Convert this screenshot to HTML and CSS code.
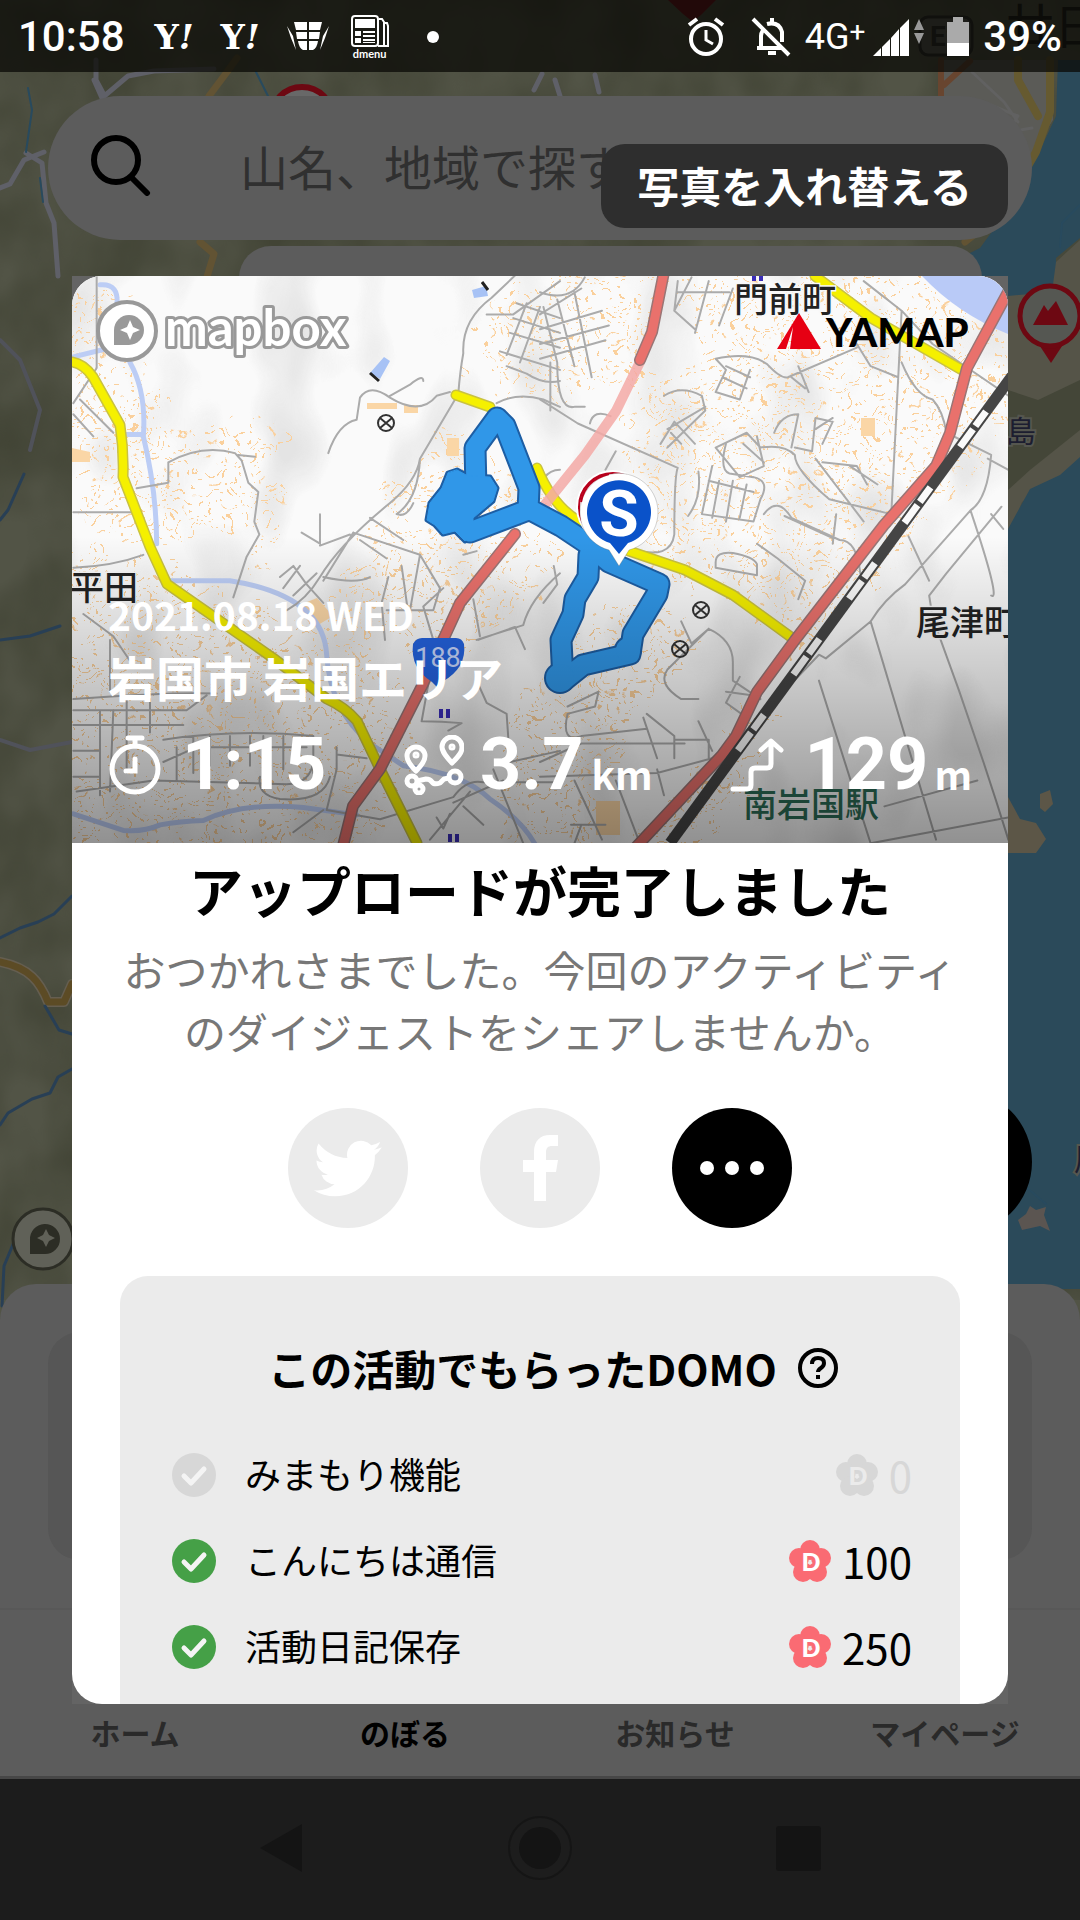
FILE: index.html
```html
<!DOCTYPE html>
<html lang="ja">
<head>
<meta charset="utf-8">
<meta name="viewport" content="width=device-width, initial-scale=1">
<title>YAMAP</title>
<link rel="stylesheet" href="styles.css">
</head>
<body>
<div class="screen">
  <svg class="area-map" viewBox="0 0 1080 1920" preserveAspectRatio="xMidYMid slice" aria-hidden="true">
    <defs>
      <filter id="relief" x="0" y="0" width="100%" height="100%" color-interpolation-filters="sRGB">
        <feTurbulence type="fractalNoise" baseFrequency=".014 .010" numOctaves="3" seed="8"/>
        <feColorMatrix values="0 0 0 0 .22  0 0 0 0 .23  0 0 0 0 .17  2 0 0 0 -.6"/>
      </filter>
    </defs>
    <rect width="1080" height="1920" fill="#525446"/>
    <rect width="1080" height="1300" filter="url(#relief)" opacity=".6"/>
    <path fill="#5b5b57" d="M938 60h115v60l-26 40-30 50h-50z"/>
    <path fill="#2b4a5a" d="M1058 60h22v178l-24 20v40l-56 10h-40v-50l20-10 22-30 26-62 14-10 14-30z"/>
    <path fill="#555448" d="M1080 240l-24 22-4 30-44 4v240l14-34 28-18 30-20z"/>
    <path fill="#444638" d="M1008 390l30 10 42-20v50l-50 40-22 20z"/>
    <path fill="#2b4a5a" d="M1080 457l-20 18-30 14-22 40v760h72z"/>
    <path fill="#5c5647" d="M1008 797l12 22 16 4 10 16-10 14h-28z"/>
    <path fill="#5c5647" d="M1040 794l10-4 3 14-8 8-5-4z"/>
    <path fill="#5b5551" d="M1018 1220l8-6 4-8 6 4 10-3-2 8 6 16-10-5-18 4z"/>
    <g fill="none" stroke-linecap="round" stroke-linejoin="round">
      <path stroke="#5f6068" stroke-width="5" d="M0 188l10-4 14-24 20-8M94 80l8 18 26-22 26-5 60-2M96 60V80l8 15M26 153l16 10 4 40 8 20 4 53M595 75l4 17M555 80l5 16M534 90l8-16"/>
      <path stroke="#284a5e" stroke-width="2" d="M28 88l4 22-6 42M40 178l3 24M256 72l12 24M1080 205l-18 18-2 24M1006 1170l40 34"/>
      <path stroke="#625333" stroke-width="7" d="M209 96l18-24 10-14M200 242l14 12-8 26M965 242l10-8"/>
      <path stroke="#68452f" stroke-width="6" d="M941 60v36M944 85l26-24"/>
      <path stroke="#665a30" stroke-width="8" d="M1050 60v52l-14 40-8 14M1018 60v20l20 36"/>
      <path stroke="#616161" stroke-width="3" d="M972 72l32 30 14 20M988 104l30 12-10 16 24-4"/>
      <path stroke="#655e50" stroke-width="10" d="M0 962c30 6 40 20 48 40h16l8-18"/>
      <path stroke="#5c4b25" stroke-width="7" d="M0 962c30 6 40 20 48 40h16l8-18"/>
      <path stroke="#283f55" stroke-width="3" d="M0 938l20-10 18-6 16-8 18-18M0 1125l8-12 24-14 18-6 8-16 14-8M45 1006l14 24 13 4M14 1242l-10 24-2 40M0 520l8-10 16-36M0 640l30-4 30-10"/>
      <path stroke="#50525a" stroke-width="4" d="M0 340l20 20 20 50-10 40M0 740l30 10 42-8"/>
    </g>
    <circle cx="302" cy="118" r="31" fill="#686868" stroke="#6d0812" stroke-width="6"/>
    <path fill="#6d0812" d="M668 0h48l-14 14-9 8-10-8z"/>
    <path fill="#6d0812" d="M1036 340h30l-15 23z"/>
    <circle cx="1050" cy="316" r="30" fill="#555752" stroke="#6d0812" stroke-width="5"/>
    <path fill="#6d0812" d="M1033 325l11-20 4 6 8-10 12 24z"/>
    <g class="map-label"><text x="1006" y="442" font-size="30">島</text><text x="1074" y="1170" font-size="30">周</text></g>
    <text class="map-city" x="1006" y="44">廿日</text>
    <rect x="920" y="17" width="52" height="38" rx="8" fill="#5a5a55" stroke="#222" stroke-width="3"/>
    <text class="map-road" x="930" y="46">E2</text>
    <circle cx="43" cy="1239" r="30" fill="#606158" stroke="#2c2d25" stroke-width="3"/>
    <path fill="#2c2d25" d="M30 1254v-14a15 15 0 1 1 15 14z"/>
    <path fill="#606158" d="M46 1229l3 6 6 3-6 3-3 6-3-6-6-3 6-3z"/>
  </svg>

  <div class="app">
    <header class="status">
      <div class="status-group">
        <span class="clock">10:58</span>
        <span class="yahoo">Y<i>!</i></span>
        <span class="yahoo">Y<i>!</i></span>
        <svg width="42" height="32" viewBox="0 0 42 32" fill="#fff" aria-hidden="true"><path d="M7 1h13v8H9zM22 1h13l-2 8H22zM9 11h11v7H10zM22 11h11l-1 7H22zM11 20h9v9h-4q-4-2-5-9zM22 20h9q-1 7-5 9h-4zM0 5l6 10 3 14-5-12zM42 5l-6 10-3 14 5-12z"/></svg>
        <span class="dmenu">
          <svg width="38" height="33" viewBox="0 0 38 33" fill="none" stroke="#fff" stroke-width="2" aria-hidden="true"><rect x="1" y="1" width="26" height="30" rx="3"/><path d="M28 4h3l2 3v24h-6M33 8h3l1 3v20h-5"/><path fill="#fff" stroke="none" d="M4 4h20v9H4zM4 16h6v5H4zM4 23h6v5H4zM12 16h12v2H12zM12 20h12v2H12zM12 24h12v2H12zM12 27h12v1H12z"/></svg>
          dmenu
        </span>
        <span class="dot"></span>
      </div>
      <div class="status-group status-right">
        <svg width="38" height="40" viewBox="0 0 38 40" fill="none" stroke="#fff" stroke-width="4" aria-hidden="true"><circle cx="19" cy="22" r="15"/><path stroke-width="3" d="M19 13v10l7 4"/><path d="M2 8l8-6M36 8l-8-6"/></svg>
        <svg class="bell" width="40" height="40" viewBox="0 0 40 40" fill="none" stroke="#fff" stroke-width="4" aria-hidden="true"><path d="M12 13q-2 3-2 6v12H6h26M16 7q12-3 15 8v10M17 36h8"/><path d="M21 1v5M2 2l36 36" stroke-width="4"/></svg>
        <span class="network">4G<sup>+</sup></span>
        <svg class="signal" width="52" height="38" viewBox="0 0 52 38" fill="#fff" aria-hidden="true"><path d="M0 38l8-8v8zM9 29l8-8v17H9zM18 20l8-9v27h-8zM27 10l9-9v37h-9z"/><path fill="#999" d="M46 1l5 11H41zM41 15h10l-5 11z"/></svg>
        <svg width="22" height="40" viewBox="0 0 22 40" aria-hidden="true"><path fill="#aaa" d="M6 0h10v5h6v22H0V5h6z"/><path fill="#fff" d="M0 26h22v13H0z"/></svg>
        <span class="battery">39%</span>
      </div>
    </header>

    <form class="search">
      <svg width="62" height="62" viewBox="0 0 62 62" fill="none" stroke="#000" stroke-width="6" stroke-linecap="round" aria-hidden="true"><circle cx="26" cy="26" r="22"/><path d="M41 43l16 16"/></svg>
      <input type="search" placeholder="山名、地域で探す" aria-label="山名、地域で探す">
    </form>
    <div class="filter"></div>
    <div class="map-space"></div>
    <button class="record" type="button" aria-label="活動を開始"></button>
    <section class="sheet"><div class="sheet-card"></div></section>
    <nav class="tabs">
      <a href="#home">ホーム</a>
      <a href="#climb" class="current">のぼる</a>
      <a href="#news">お知らせ</a>
      <a href="#me">マイページ</a>
    </nav>
    <div class="system-nav">
      <button type="button" aria-label="戻る"><svg width="66" height="66" viewBox="0 0 66 66"><path fill="#141414" d="M12 33L54 9v48z"/></svg></button>
      <button type="button" aria-label="ホーム画面"><svg width="66" height="66" viewBox="0 0 66 66"><circle cx="33" cy="33" r="31" fill="#1d1d1d" stroke="#151515" stroke-width="2"/><circle cx="33" cy="33" r="21" fill="#141414"/></svg></button>
      <button type="button" aria-label="履歴"><svg width="66" height="66" viewBox="0 0 66 66"><rect x="10" y="11" width="45" height="45" rx="3" fill="#141414"/></svg></button>
    </div>
  </div>

  <div class="overlay">
    <button class="swap" type="button">写真を入れ替える</button>
    <div class="card-frame">
    <main class="card">
      <div class="digest">
        <svg class="digest-map" viewBox="0 0 936 567" aria-hidden="true">
          <defs>
            <pattern id="houses" width="44" height="38" patternUnits="userSpaceOnUse">
              <path stroke="#fad09c" stroke-width="2" fill="none" d="M2 4h5M12 9h4M22 3l4 3M33 7h5M6 16l4-2M17 19h5M28 15v4M37 20h5M3 27h5M14 30l4-3M25 26h5M35 31l5-2M9 36h4M21 35h4"/>
            </pattern>
            <filter id="scatter" x="0" y="0" width="100%" height="100%" color-interpolation-filters="sRGB">
              <feTurbulence type="fractalNoise" baseFrequency=".045" numOctaves="2" seed="3" result="noise"/>
              <feDisplacementMap in="SourceGraphic" in2="noise" scale="60" xChannelSelector="R" yChannelSelector="G"/>
            </filter>
            <filter id="hills" x="0" y="0" width="100%" height="100%" color-interpolation-filters="sRGB">
              <feTurbulence type="fractalNoise" baseFrequency=".016 .010" numOctaves="2" seed="4"/>
              <feColorMatrix values="0 0 0 0 .84  0 0 0 0 .84  0 0 0 0 .84  3 0 0 0 -1.4"/>
            </filter>
            <linearGradient id="shade" x1="0" y1="0" x2="0" y2="1">
              <stop offset=".46" stop-color="#000" stop-opacity="0"/>
              <stop offset="1" stop-color="#000" stop-opacity=".42"/>
            </linearGradient>
            <g id="school"><circle r="8" fill="none"/><path fill="none" d="M-6-5L6 5M6-5L-6 5"/></g>
          </defs>
          <rect width="936" height="567" fill="#fafafa"/>
          <rect width="936" height="567" filter="url(#hills)" opacity=".6"/>
          <path fill="url(#houses)" filter="url(#scatter)" d="M0 10h50l20 80 20 60h120l-20 90-100 30-80-20zM0 260l90 30 50 20 90 40 60 10 30 60 20 60-40 97H0zM150 240l40-60 20 60-20 60zM310 220l70-70 130 100-40 60-90 80-80-40-70 20zM430 20l60-20h100l-20 100-110 30-60-50zM600 0h336v140l-60 80-80 100-70 60-30-40-120-50-30-90 20-90 80-30zM520 330l70 0 40 40-60 60-30 70-50-60zM560 567l110-130 40-10-60 140zM430 440l50-40 70 60-40 107h-80zM0 480l100-40 60 20-40 60z"/>
          <path fill="#b9caf7" d="M850 0h86v58q-50-20-86-58z"/>
          <g fill="#fad6a6"><path d="M789 142h14v18h-14zM375 162h12v18h-12zM295 127h30v6h-30zM225 330l20-8 16 18-20 12zM0 172l18 4v10H0zM524 525h24v34h-24zM332 129h14v8h-14z"/></g>
          <g fill="none" stroke-linecap="round" stroke-linejoin="round">
            <g transform="translate(-12 -6) scale(.3333 .3699)" class="lines">
              <path class="river" d="M120 40q60-5 50 60l40 150q50 80 40 200 40 150 40 290M40 235l90-20M190 445h60M330 840h180q280 40 290 200 10 150 130 240l100 60q180 20 260 90 100 60 140 130M40 1470l150 45q60 5 110-15 60-10 130-12 120-50 300-35l160 20"/>
              <path class="street" d="M110 15v250L40 360M40 390l60 60M60 350l100 90M230 590l95-15v-55q100-50 200-25l20 20 20 60 30 25-12 80 15 35-38 60-40 110M535 500l50 5M40 655h180M40 805q120-5 210-35M1365 15l-70 60q-90 60-85 150-10 50-15 110L1080 510q-5 110-70 150 30 10 50-30M1080 510q-10 60-90 120-150 110-210 200-40 60-100 90M805 495q30-80 85-90l10-60q30-40 90 0 90 50 140-5l40-10M990 340l60-30q40-30 40-10M725 710l55 30v-80M780 745l90-30M880 710l200 60 60 90-20 60H980M880 710l-90 130M930 670l100 60M900 730l80 50M985 830l-20 70 10 100M1025 800l20 130M1080 770l-30 150M790 830q100 20 140 0M660 830l40-30 40 50 50 50M670 860l50-60M700 880l70-60M40 1160q300-20 430-15M40 1190h340l60-40M120 1190v230M160 1190l-10 220M200 1160v200M270 1160v90M40 1230h330M40 1300h80M40 1370h80M310 1270q220-30 450-10v100M310 1330l100-40h330M350 1290v90M400 1260v100M450 1260v80M510 1260v80M570 1260v80M610 1260v100M670 1260v90M50 1410l230-30 400 10q70 0 80-60M600 1370q-10 50 60 60 130 10 150-60M830 1290v60l-30 110 160 25 220-60q40-50 90-40h230M830 1310l90 10M1250 1110l30 60 60 30 10 130 150-30M1255 1000l110-35 30 60M1260 990l-20-100M1150 860l-60 50 30 90M1210 770l40-10M1500 820q-90 70-110 140l-140 40M1105 1120l-20 100q60 0 120 5l-40 20M700 1520l90-60M1300 1350l90 200M1180 1440l150-60M1110 1540l120-130M1130 1480l20 30 20-40M1210 1450l60 50M150 1000v140M70 930l90 60 60 80M1430 630q10-90 70-90"/>
              <path class="street" d="M1310 360q60-30 140-10l50 20M1340 260l60 20q50 30 100 20M1280 120h80l140-90M1370 90l130 40M1360 130l140 40M1350 170l150 40M1320 220l180 50M1400 90l-60 140M1440 100l-60 150"/>
            </g>
            <g transform="translate(468 -6) scale(.34439 .3699)" class="lines">
              <path class="street" d="M0 60q90 30 130-40M0 120l120-70M0 160l180-50M0 200l200-50M0 240l190-50M10 100l40 150M50 80l50 180M100 60l50 230M50 250q0 130 50 120h30M0 350l110 65 290 120q-10 20-10 180-10 70-120 40M145 415q10-40 60-20M220 490l-30 50M400 30l-10 80 60 50M440 20l-50 90M490 30l-40 140M560 50l-40 100M400 60h150M360 340q50-30 110 0l10 40-110 100M370 430l110-60M350 470l40-60 60 60M380 440l30 30M510 240q100-20 150 15 40 40 60 35l200-80M510 240l30 30-30 60 70 20 30-80M540 260l70 30M530 290l70 30M730 290l40 30M750 260l30 70M920 200l40 60 80 30M940 30l110 80 90 90 220 140M1050 110l-30 550-180-40q-100-80-100-120-30-30-100-20l-40-40-90 40 70 80 70-30-20-80M590 470l60 50M680 440q20-50 70-50l-20 90M740 480l50 10 10-90 50 10-30 60M800 430l50-30M540 470q-20 70 10 80l70 10q50 10 20 60l-20 60-150-20 30-130M490 570l130 30M520 570l-20 100M560 570l-20 110M600 580l-20 90M430 665q40-50 30-120M800 510l140 170M820 520l100 10 30 50M900 530l80 50M1050 250q40 90 90 100 30 30 40 90l130 60q-10 120-60 150l-190 200q-60 40-100 100l-130 100-20-10-410 400M1300 510l60 30M1340 640l-160 180-50 60 10 60q120 300 220 600M1250 650q90 250 60 230M1070 720l60 120M1310 660l35 40M960 950l190 590M810 1110l150 440M1360 1480l-400 70M1000 1450l270-70M710 665l140 60M630 740l60 40 80 60-20 50M510 790q0-30 50-25 60 10 70 30v30q-60-10-120-20zM650 660q40-50 80 10l140 60q50 0 60 90M860 660l-10 80M410 950l30 60 50-40q70 30 70 90v50l80 50M490 970l-120 110q-30 40 40 80h50M540 1140l80 10M580 1100l-40 70 60 40M80 1180l90-40-10 40-80 20q-20 80 40 60l190-20M300 1210l40 110M310 1200l80 60v60M390 1270h100v50M460 1220l40 80M0 1330l120-50h300M0 1370l340-10 160-40M100 1380l80 160M220 1380l70 170M340 1350l20 70M90 1500h100M120 1500l-20 50M30 380V250M10 900l40-50-10-50"/>
            </g>
            <path stroke="#c9c240" stroke-width="11" d="M0 86q12 2 21 15l27 48q4 26 3 52l27 70 17 37 43 30 63 44 54 41q18 8 30 22l23 48 37 74M384 119l34 12M465 192q14 34 37 50l55 33 56 19 48 25 62 45M743 0l56 42 91 52"/>
            <path stroke="#f5f000" stroke-width="8" d="M0 86q12 2 21 15l27 48q4 26 3 52l27 70 17 37 43 30 63 44 54 41q18 8 30 22l23 48 37 74M384 119l34 12M465 192q14 34 37 50l55 33 56 19 48 25 62 45M743 0l56 42 91 52"/>
            <path stroke="#f3a9a6" stroke-opacity=".85" stroke-width="10" d="M568 86l-24 49-31 44-42 52"/>
            <path stroke="#9a7575" stroke-width="12" d="M592-4l-12 60-12 28M443 258l-55 69-17 37-20 44-43 85-27 37-10 40M936 16l-41 76-17 65-14 33-52 59-89 115-38 52-21 44-14 19-86 92"/>
            <path stroke="#e9716c" stroke-width="9" d="M592-4l-12 60-12 28M443 258l-55 69-17 37-20 44-43 85-27 37-10 40M936 16l-41 76-17 65-14 33-52 59-89 115-38 52-21 44-14 19-86 92"/>
            <path stroke="#454545" stroke-width="11" stroke-linecap="butt" d="M940 100L598 567"/>
            <path stroke="#fafafa" stroke-width="7" stroke-linecap="butt" stroke-dasharray="18 4 22 50" stroke-dashoffset="-44" d="M940 100L664 477"/>
          </g>
          <g stroke="#333" stroke-width="2"><use href="#school" x="314" y="147"/><use href="#school" x="629" y="334"/><use href="#school" x="608" y="373"/></g>
          <path fill="#a7c2f5" d="M298 97l14-16 6 4-10 18zM400 14l14-4 2 10-14 2z"/>
          <path fill="none" stroke="#222" stroke-width="3" d="M298 97l9 8M410 6l6 8"/>
          <path fill="#2463e0" d="M341 368q3-6 9-6h34q6 0 8 6 3 24-22 38l-5 5-5-5q-22-14-19-38z"/>
          <text class="route-no" x="366" y="391" text-anchor="middle">188</text>
          <g fill="#3a2db8"><path d="M367 433h4v9h-4zM374 433h4v9h-4zM376 558h4v8h-4zM383 558h4v8h-4zM680 0h4v5h-4zM687 0h4v5h-4z"/></g>
          <g class="place">
            <text x="662" y="36">門前町</text>
            <text x="-2" y="324">平田</text>
            <text x="844" y="359">尾津町</text>
            <text class="station" x="671" y="541">南岩国駅</text>
          </g>
          <g stroke-linejoin="round" stroke-linecap="round">
            <path fill="none" stroke="#1d5ea4" stroke-width="23" d="M404 212l-1-40 22-30 8 8 24 62-1 22-58 22M455 232l34 18 24 16 24 20 50 22-2 10-24 40-3 20-47 11-20 16-2-41 12-26 2-15 13-22 1-22"/>
            <path fill="#1d5ea4" stroke="#1d5ea4" stroke-width="5" d="M385 194l11 6 22 1 7 11-4 13-20 17v16l-8 7-10-10-12 3-8-9-8-5 3-17 12-15 6-15z"/>
            <circle cx="488" cy="402" r="16" fill="#1d5ea4"/><circle cx="556" cy="374" r="14" fill="#1d5ea4"/>
            <path fill="none" stroke="#3097e8" stroke-width="19" d="M404 212l-1-40 22-30 8 8 24 62-1 22-58 22M455 232l34 18 24 16 24 20 50 22-2 10-24 40-3 20-47 11-20 16-2-41 12-26 2-15 13-22 1-22"/>
            <path fill="#3097e8" stroke="#3097e8" d="M385 194l11 6 22 1 7 11-4 13-20 17v16l-8 7-10-10-12 3-8-9-8-5 3-17 12-15 6-15z"/>
            <circle cx="488" cy="402" r="14" fill="#3097e8"/><circle cx="556" cy="374" r="12" fill="#3097e8"/>
          </g>
          <rect width="936" height="567" fill="url(#shade)"/>
          <circle cx="541" cy="231" r="37" fill="#fff"/><circle cx="541" cy="231" r="34" fill="none" stroke="#b8001c" stroke-width="2"/>
          <path fill="#fff" stroke="#555" stroke-opacity=".25" d="M547 290l-10-16a39 39 0 1 1 20 0z"/>
          <path fill="none" stroke="#b8001c" stroke-width="2" d="M509 226q4-22 28-28"/>
          <path fill="#0a52c9" d="M547 278l-9-11a32 32 0 1 1 18 0z"/>
          <text class="start" x="547" y="260" text-anchor="middle">S</text>
          <circle cx="55" cy="55" r="29" fill="#fff" stroke="#999" stroke-width="4"/>
          <path fill="#999" d="M42 69V54a15 15 0 1 1 15 15z"/>
          <path fill="#fff" d="M58 44l3 7 7 3-7 3-3 7-3-7-7-3 7-3z"/>
          <text class="mapbox" x="93" y="70">mapbox</text>
          <path fill="#e60013" d="M705 73l22-36 22 36h-31l3-22-7 22z"/>
          <text class="yamap" x="754" y="71">YAMAP</text>
        </svg>
        <div class="digest-info">
          <time class="date" datetime="2021-08-18">2021.08.18 WED</time>
          <div class="area">岩国市 岩国エリア</div>
          <div class="stats">
            <div class="stat">
              <svg width="54" height="60" viewBox="0 0 54 60" fill="none" stroke="#fff" stroke-width="5" stroke-linecap="round" aria-hidden="true"><circle cx="27" cy="34" r="23"/><path d="M20 3h14M27 4v7M27 24v12h-9"/></svg>
              <b>1:15</b>
            </div>
            <div class="stat stat-distance">
              <svg width="60" height="60" viewBox="0 0 60 60" fill="none" stroke="#fff" stroke-width="5" stroke-linejoin="round" aria-hidden="true"><path d="M12 36C3 27 3 23 3 21a9 9 0 0 1 18 0c0 3-1 7-9 15zM48 28C39 18 38 15 38 12a10 10 0 0 1 20 0c0 4-1 7-10 16z"/><circle cx="12" cy="20" r="2" stroke-width="3"/><circle cx="48" cy="12" r="2" stroke-width="3"/><circle cx="8" cy="46" r="5"/><circle cx="15" cy="54" r="4"/><circle cx="51" cy="42" r="6"/><path d="M13 46l9-2q4 0 6 3t8 1l4-4 5-1"/></svg>
              <b>3.7</b><span>km</span>
            </div>
            <div class="stat">
              <svg width="54" height="56" viewBox="0 0 54 56" fill="none" stroke="#fff" stroke-width="5" stroke-linecap="round" stroke-linejoin="round" aria-hidden="true"><path d="M3 52h14q4 0 4-4V35q0-4 4-4h12q4 0 4-4V6M31 13L41 4l10 9"/></svg>
              <b>129</b><span>m</span>
            </div>
          </div>
        </div>
      </div>
      <h1>アップロードが完了しました</h1>
      <p class="lead">おつかれさまでした。今回のアクティビティのダイジェストをシェアしませんか。</p>
      <div class="share">
        <button type="button" aria-label="Twitter"><svg width="70" height="70" viewBox="0 0 24 24" fill="#fff"><path d="M23.6 4.900a9.700 9.700 0 0 1-2.700.8 4.700 4.700 0 0 0 2.100-2.600 9.500 9.500 0 0 1-3 1.100 4.800 4.800 0 0 0-8.200 4.400A13.600 13.600 0 0 1 1.900 3.600a4.800 4.800 0 0 0 1.500 6.400 4.700 4.700 0 0 1-2.200-.6v.1a4.800 4.800 0 0 0 3.900 4.700 4.800 4.800 0 0 1-2.200.1 4.800 4.800 0 0 0 4.500 3.300A9.600 9.600 0 0 1 .3 19.600a13.500 13.500 0 0 0 7.300 2.100c8.800 0 13.900-7.400 13.600-14.100a9.800 9.800 0 0 0 2.400-2.700z"/></svg></button>
        <button type="button" aria-label="Facebook"><svg width="40" height="66" viewBox="0 0 40 66" fill="#fff"><path d="M14 66V37H3V25h11v-8C14 6 20 0 30 0h8v11h-6c-4 0-6 2-6 6v8h12l-2 12H26v29z"/></svg></button>
        <button type="button" class="more" aria-label="その他"><svg width="66" height="16" viewBox="0 0 66 16" fill="#fff"><circle cx="8" cy="8" r="7"/><circle cx="33" cy="8" r="7"/><circle cx="58" cy="8" r="7"/></svg></button>
      </div>
      <section class="domo">
        <h2>この活動でもらったDOMO
          <button type="button" aria-label="DOMOとは"><svg width="42" height="42" viewBox="0 0 42 42" fill="none" stroke="#000" stroke-width="4"><circle cx="21" cy="21" r="18"/><path d="M15 17q0-6 6-6t6 5q0 3-3 5t-3 4"/><path d="M21 28v4"/></svg></button>
        </h2>
        <ul>
          <li class="off">
            <svg width="46" height="46" viewBox="0 0 46 46" aria-hidden="true"><circle cx="23" cy="23" r="22" fill="#d7d7d7"/><path class="tick" d="M13 24l7 7 13-14"/></svg>
            <span class="name">みまもり機能</span>
            <svg width="44" height="44" viewBox="0 0 44 44" aria-hidden="true"><g fill="#d7d7d7"><circle cx="22" cy="11" r="10"/><circle cx="11" cy="19" r="10"/><circle cx="33" cy="19" r="10"/><circle cx="15" cy="33" r="10"/><circle cx="29" cy="33" r="10"/></g><text class="coin" x="23" y="32" text-anchor="middle">D</text></svg>
            <span class="points">0</span>
          </li>
          <li>
            <svg width="46" height="46" viewBox="0 0 46 46" aria-hidden="true"><circle cx="23" cy="23" r="22" fill="#45a047"/><path class="tick" d="M13 24l7 7 13-14"/></svg>
            <span class="name">こんにちは通信</span>
            <svg width="44" height="44" viewBox="0 0 44 44" aria-hidden="true"><g fill="#fa6b73"><circle cx="22" cy="11" r="10"/><circle cx="11" cy="19" r="10"/><circle cx="33" cy="19" r="10"/><circle cx="15" cy="33" r="10"/><circle cx="29" cy="33" r="10"/></g><text class="coin" x="23" y="32" text-anchor="middle">D</text></svg>
            <span class="points">100</span>
          </li>
          <li>
            <svg width="46" height="46" viewBox="0 0 46 46" aria-hidden="true"><circle cx="23" cy="23" r="22" fill="#45a047"/><path class="tick" d="M13 24l7 7 13-14"/></svg>
            <span class="name">活動日記保存</span>
            <svg width="44" height="44" viewBox="0 0 44 44" aria-hidden="true"><g fill="#fa6b73"><circle cx="22" cy="11" r="10"/><circle cx="11" cy="19" r="10"/><circle cx="33" cy="19" r="10"/><circle cx="15" cy="33" r="10"/><circle cx="29" cy="33" r="10"/></g><text class="coin" x="23" y="32" text-anchor="middle">D</text></svg>
            <span class="points">250</span>
          </li>
        </ul>
      </section>
    </main>
    </div>
  </div>
</div>
</body>
</html>
```
FILE: styles.css
```css
* { box-sizing: border-box; }
body {
  margin: 0;
  font-family: "Noto Sans CJK JP", "Noto Sans", sans-serif;
  color: #000;
}
button {
  display: flex;
  align-items: center;
  justify-content: center;
  border: 0;
  padding: 0;
  font: inherit;
  background: none;
}
svg { display: block; flex: none; }
.screen {
  position: relative;
  min-height: 100vh;
  overflow: hidden;
  display: flex;
}
.area-map {
  position: absolute;
  inset: 0;
  width: 100%;
  height: 100%;
}
.map-label text { fill: #1c1d30; stroke: #55564f; stroke-width: 4; paint-order: stroke; }
.map-city { font-size: 48px; fill: #111; }
.map-road { font: bold 28px Roboto, sans-serif; fill: #222; }

/* app behind the dialog */
.app {
  position: relative;
  flex: 1;
  display: flex;
  flex-direction: column;
}
.status {
  height: 72px;
  padding: 2px 18px 0;
  display: flex;
  align-items: center;
  justify-content: space-between;
  background: rgba(10, 10, 6, .76);
  color: #fff;
  font-family: Roboto, sans-serif;
}
.status-group { display: flex; align-items: center; gap: 22px; }
.clock, .battery { font-size: 42px; font-weight: 500; line-height: 48px; }
.clock { margin-right: 8px; }
.yahoo { width: 44px; font: bold 34px/36px "DejaVu Serif", serif; white-space: nowrap; }
.yahoo i { font-style: italic; }
.dmenu {
  display: flex;
  flex-direction: column;
  align-items: center;
  font: bold 11px/12px Lato, sans-serif;
}
.dot { width: 12px; height: 12px; margin-left: 16px; border-radius: 50%; background: #fff; }
.status-right { gap: 14px; }
.bell { margin-left: 12px; }
.network { font-size: 36px; line-height: 40px; white-space: nowrap; }
.network sup { font-size: 28px; line-height: 20px; vertical-align: 8px; }
.signal { margin-left: -6px; margin-right: 8px; }
.search {
  height: 144px;
  margin: 24px 48px 6px;
  padding: 0 42px 6px;
  display: flex;
  align-items: center;
  gap: 88px;
  border-radius: 72px;
  background: #5c5c5c;
}
.search input {
  flex: 1;
  min-width: 0;
  border: 0;
  padding: 0;
  background: none;
  font: inherit;
  font-size: 48px;
  line-height: 72px;
}
.search input::placeholder { color: #303030; opacity: 1; }
.filter {
  height: 96px;
  margin: 0 98px 0 239px;
  border-radius: 32px;
  background: #5c5c5c;
}
.map-space { flex: 1; }
.record {
  align-self: flex-end;
  width: 144px;
  height: 144px;
  margin: 0 48px 50px;
  border-radius: 50%;
  background: #000;
}
.sheet {
  padding: 48px 48px 48px;
  border-radius: 36px 36px 0 0;
  background: #5c5c5c;
}
.sheet-card { height: 228px; border-radius: 32px; background: #565656; }
.tabs {
  height: 171px;
  padding-top: 82px;
  display: flex;
  background: #5c5c5c;
  border-top: 2px solid #585858;
  border-bottom: 3px solid #474747;
}
.tabs a {
  flex: 1;
  text-align: center;
  font-size: 30px;
  font-weight: 700;
  line-height: 80px;
  color: #2a2a2a;
  text-decoration: none;
}
.tabs a.current { color: #000; }
.system-nav {
  height: 141px;
  padding: 0 151px 4px;
  display: flex;
  align-items: center;
  justify-content: space-around;
  background: #1c1c1c;
}

/* upload dialog */
.overlay {
  position: absolute;
  inset: 0;
  padding: 144px 72px 216px;
  display: flex;
  flex-direction: column;
  gap: 48px;
}
.swap {
  align-self: flex-end;
  height: 84px;
  padding: 0 36px 4px;
  border-radius: 24px;
  background: #2e2e2e;
  color: #fff;
  font-size: 42px;
  font-weight: 700;
}
.card-frame { flex: 1; min-height: 0; background: #646464; }
.card {
  height: 100%;
  overflow: hidden;
  border-radius: 30px;
  background: #fff;
}
.digest { position: relative; }
.digest-map { width: 100%; height: auto; }
.lines path { vector-effect: non-scaling-stroke; }
.lines .street { stroke: #ababab; stroke-width: 2px; }
.lines .river { stroke: #bccdf5; stroke-width: 5px; }
.place { font: 500 34px "Noto Sans CJK JP", sans-serif; fill: #222; stroke: #f8f8f8; stroke-width: 3px; paint-order: stroke; }
.place .station { fill: #2b6b55; stroke: none; }
.route-no { font: 27px Roboto, sans-serif; fill: #c9d8ff; }
.start { font: bold 64px Roboto, sans-serif; fill: #fff; }
.mapbox { font: bold 51px Lato, sans-serif; fill: #fff; stroke: #999; stroke-width: 6px; stroke-linejoin: round; paint-order: stroke; }
.yamap { font: 900 40px Lato, sans-serif; fill: #000; }
.digest-info {
  position: absolute;
  inset: auto 0 0;
  padding: 0 36px 30px;
  color: #fff;
  font-weight: 700;
}
.date { display: block; font-size: 39px; line-height: 54px; }
.area { font-size: 48px; line-height: 70px; }
.stats { margin-top: 6px; display: flex; justify-content: space-between; }
.stat { display: flex; align-items: center; gap: 20px; height: 96px; }
.stat-distance { gap: 16px; }
.stat b { font: bold 72px/96px Roboto, sans-serif; }
.stat span { margin-left: -14px; font-size: 39px; line-height: 54px; padding-top: 16px; }
.stat-distance span { margin-left: -8px; }
h1 {
  margin: 7px 0 0;
  text-align: center;
  font-size: 54px;
  font-weight: 700;
  line-height: 80px;
}
.lead {
  margin: 8px 48px 0;
  text-align: center;
  font-size: 42px;
  line-height: 62px;
  color: #777;
}
.share { margin-top: 46px; display: flex; justify-content: center; gap: 72px; }
.share button {
  width: 120px;
  height: 120px;
  border-radius: 50%;
  background: #ebebeb;
}
.share .more { background: #000; }
.domo {
  margin: 48px 48px 0;
  padding: 60px 48px 96px 51px;
  border-radius: 28px;
  background: #ebebeb;
}
.domo h2 {
  margin: 0 0 32px;
  padding-left: 24px;
  display: flex;
  align-items: center;
  justify-content: center;
  gap: 20px;
  font-size: 42px;
  font-weight: 700;
  line-height: 64px;
}
.domo ul { margin: 0; padding: 0; list-style: none; }
.domo li { height: 86px; display: flex; align-items: center; }
.name { flex: 1; margin-left: 28px; padding-bottom: 4px; font-size: 36px; line-height: 54px; }
.points { margin-left: 10px; font-size: 42px; line-height: 60px; }
.off .points { color: #d7d7d7; }
.tick { fill: none; stroke: #f4f4f4; stroke-width: 5px; stroke-linecap: round; stroke-linejoin: round; }
.coin { font: 900 25px Lato, sans-serif; fill: #fff; }
.off .coin { fill: #ebebeb; }
```
